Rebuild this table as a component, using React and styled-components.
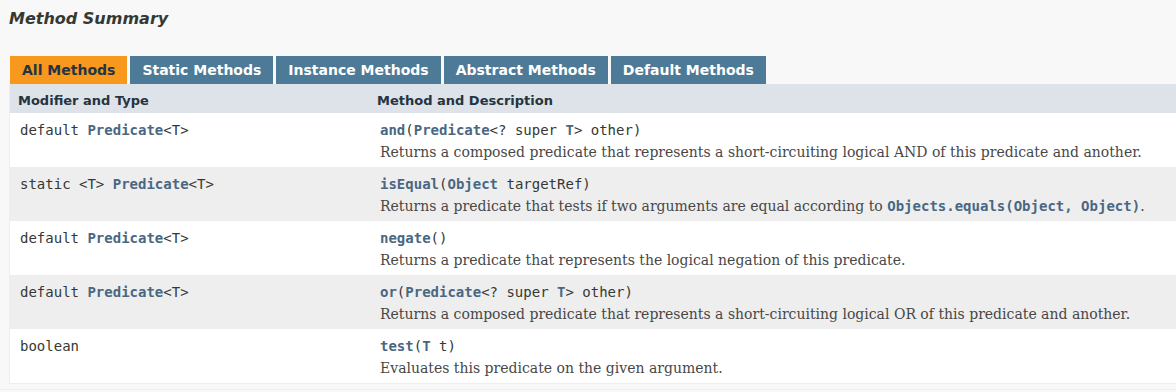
import React from "react";
import styled, {createGlobalStyle} from "styled-components";

const GlobalStyle = createGlobalStyle`
  html, body {
    margin: 0;
    padding: 0;
    background: #f8f8f8;
    overflow: hidden;
  }
  body {
    font-family: "DejaVu Sans", Arial, sans-serif;
    font-size: 14px;
    color: #353833;
  }
`

const Section = styled.div`
  padding: 9px 0 5px 9px;
  border-bottom: 1px solid #eeeeee;
  width: 1190px;
`
const Title = styled.h3`
  margin: 0 0 27px 0;
  font-size: 16px;
  line-height: 20px;
  font-style: italic;
  font-weight: bold;
  color: #353833;
`
const TabBar = styled.div`
  display: flex;
  gap: 3px;
  padding-left: 1px;
`
const Tab = styled.div`
  height: 28px;
  line-height: 28px;
  padding: 0 12px;
  font-size: 14px;
  font-weight: bold;
  white-space: nowrap;
  background: ${props => props.$active ? '#f8981d' : '#4d7a97'};
  color: ${props => props.$active ? '#253441' : '#ffffff'};
`
const Table = styled.div`
  border-left: 1px solid #eeeeee;
  border-bottom: 1px solid #eeeeee;
  background: #ffffff;
`
const HeaderRow = styled.div`
  display: grid;
  grid-template-columns: 360px 1fr;
  background: #dee3e9;
`
const HeadCell = styled.div`
  padding: 8px 3px 3px ${props => props.$last ? '7px' : '8px'};
  line-height: 18px;
  font-size: 13px;
  font-weight: bold;
  color: #253441;
  white-space: nowrap;
`
const Row = styled.div`
  display: grid;
  grid-template-columns: 360px 1fr;
  background: ${props => props.$alt ? '#eeeeee' : '#ffffff'};
`
const Cell = styled.div`
  padding: 8px 3px 3px 10px;
  line-height: 19px;
`
const Code = styled.code`
  font-family: "DejaVu Sans Mono", "Liberation Mono", monospace;
  font-size: 14px;
  color: #353833;
  white-space: nowrap;
`
const Link = styled.b`
  color: #4a6782;
  font-weight: bold;
`
const Description = styled.div`
  margin: 3px 10px 2px 0;
  font-family: "DejaVu Serif", Georgia, serif;
  font-size: 14px;
  color: #474747;
  white-space: nowrap;
`

const tabs = ['All Methods', 'Static Methods', 'Instance Methods', 'Abstract Methods', 'Default Methods'];

const methods = [
    {
        type: <>default <Link>Predicate</Link>&lt;T&gt;</>,
        sig: <><Link>and</Link>(<Link>Predicate</Link>&lt;? super <Link>T</Link>&gt; other)</>,
        desc: 'Returns a composed predicate that represents a short-circuiting logical AND of this predicate and another.'
    },
    {
        type: <>static &lt;T&gt; <Link>Predicate</Link>&lt;T&gt;</>,
        sig: <><Link>isEqual</Link>(<Link>Object</Link> targetRef)</>,
        desc: <>Returns a predicate that tests if two arguments are equal according to <Code><Link>Objects.equals(Object, Object)</Link></Code>.</>
    },
    {
        type: <>default <Link>Predicate</Link>&lt;T&gt;</>,
        sig: <><Link>negate</Link>()</>,
        desc: 'Returns a predicate that represents the logical negation of this predicate.'
    },
    {
        type: <>default <Link>Predicate</Link>&lt;T&gt;</>,
        sig: <><Link>or</Link>(<Link>Predicate</Link>&lt;? super <Link>T</Link>&gt; other)</>,
        desc: 'Returns a composed predicate that represents a short-circuiting logical OR of this predicate and another.'
    },
    {
        type: <>boolean</>,
        sig: <><Link>test</Link>(<Link>T</Link> t)</>,
        desc: 'Evaluates this predicate on the given argument.'
    },
];

export default function App() {
    return <>
        <GlobalStyle/>
        <Section>
            <Title>Method Summary</Title>
            <TabBar>
                {tabs.map((t, i) => <Tab key={t} $active={i === 0}>{t}</Tab>)}
            </TabBar>
            <Table>
                <HeaderRow>
                    <HeadCell>Modifier and Type</HeadCell>
                    <HeadCell $last>Method and Description</HeadCell>
                </HeaderRow>
                {methods.map((m, i) =>
                    <Row key={i} $alt={i % 2 === 1}>
                        <Cell><Code>{m.type}</Code></Cell>
                        <Cell>
                            <Code>{m.sig}</Code>
                            <Description>{m.desc}</Description>
                        </Cell>
                    </Row>
                )}
            </Table>
        </Section>
    </>
}
